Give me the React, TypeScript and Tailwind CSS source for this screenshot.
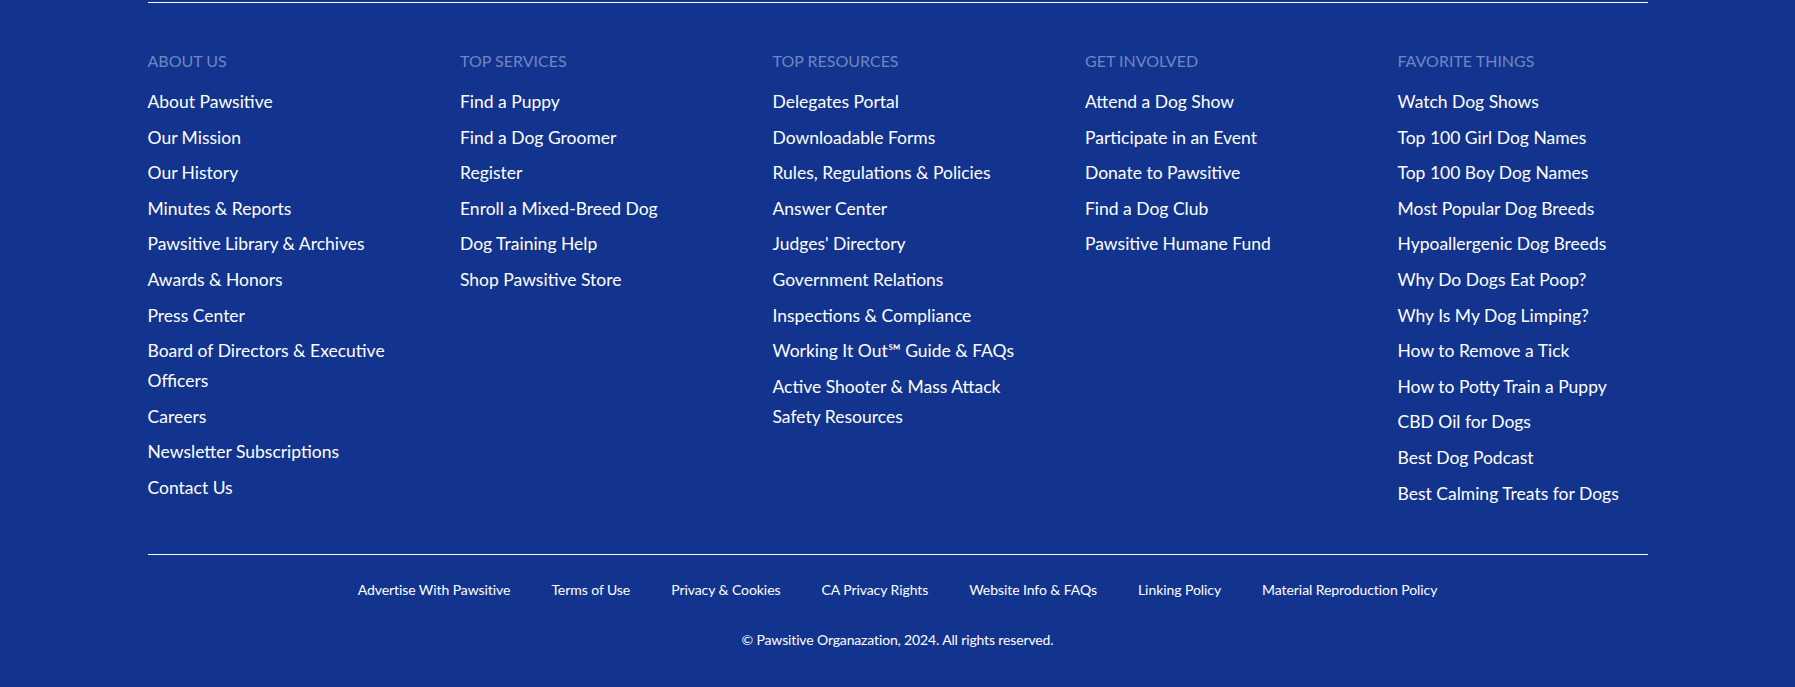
const columns: { title: string; links: string[] }[] = [
  {
    title: "About Us",
    links: [
      "About Pawsitive",
      "Our Mission",
      "Our History",
      "Minutes & Reports",
      "Pawsitive Library & Archives",
      "Awards & Honors",
      "Press Center",
      "Board of Directors & Executive Officers",
      "Careers",
      "Newsletter Subscriptions",
      "Contact Us",
    ],
  },
  {
    title: "Top Services",
    links: [
      "Find a Puppy",
      "Find a Dog Groomer",
      "Register",
      "Enroll a Mixed-Breed Dog",
      "Dog Training Help",
      "Shop Pawsitive Store",
    ],
  },
  {
    title: "Top Resources",
    links: [
      "Delegates Portal",
      "Downloadable Forms",
      "Rules, Regulations & Policies",
      "Answer Center",
      "Judges' Directory",
      "Government Relations",
      "Inspections & Compliance",
      "Working It Out\u2120 Guide & FAQs",
      "Active Shooter & Mass Attack Safety Resources",
    ],
  },
  {
    title: "Get Involved",
    links: [
      "Attend a Dog Show",
      "Participate in an Event",
      "Donate to Pawsitive",
      "Find a Dog Club",
      "Pawsitive Humane Fund",
    ],
  },
  {
    title: "Favorite Things",
    links: [
      "Watch Dog Shows",
      "Top 100 Girl Dog Names",
      "Top 100 Boy Dog Names",
      "Most Popular Dog Breeds",
      "Hypoallergenic Dog Breeds",
      "Why Do Dogs Eat Poop?",
      "Why Is My Dog Limping?",
      "How to Remove a Tick",
      "How to Potty Train a Puppy",
      "CBD Oil for Dogs",
      "Best Dog Podcast",
      "Best Calming Treats for Dogs",
    ],
  },
];

const legal = [
  "Advertise With Pawsitive",
  "Terms of Use",
  "Privacy & Cookies",
  "CA Privacy Rights",
  "Website Info & FAQs",
  "Linking Policy",
  "Material Reproduction Policy",
];

export default function App() {
  return (
    <footer className="min-h-[687px] bg-[#12348e] text-white font-['Lato','Noto_Sans',sans-serif]">
      <div className="mx-auto w-[1500px] pt-[2px] pb-[37px]">
        <div className="h-px bg-white" />

        <div className="grid grid-cols-5 gap-x-[62.5px] pt-[46px] pb-[45px]">
          {columns.map((col) => (
            <div key={col.title}>
              <h3 className="text-[16px] leading-[24px] uppercase text-[#6f86c2]">{col.title}</h3>
              <ul className="mt-[14px] flex flex-col gap-[5.6px]">
                {col.links.map((link) => (
                  <li key={link} className="text-[17.5px] leading-[30px]">
                    <a href="#">{link}</a>
                  </li>
                ))}
              </ul>
            </div>
          ))}
        </div>

        <div className="h-px bg-white" />

        <ul className="flex justify-center gap-x-[41px] pt-[25px]">
          {legal.map((item) => (
            <li key={item} className="text-[14px] leading-[20px] tracking-[-0.005em]">
              <a href="#">{item}</a>
            </li>
          ))}
        </ul>

        <p className="mt-[30px] text-center text-[14px] leading-[20px] tracking-[-0.01em]">
          © Pawsitive Organazation, 2024. All rights reserved.
        </p>
      </div>
    </footer>
  );
}
